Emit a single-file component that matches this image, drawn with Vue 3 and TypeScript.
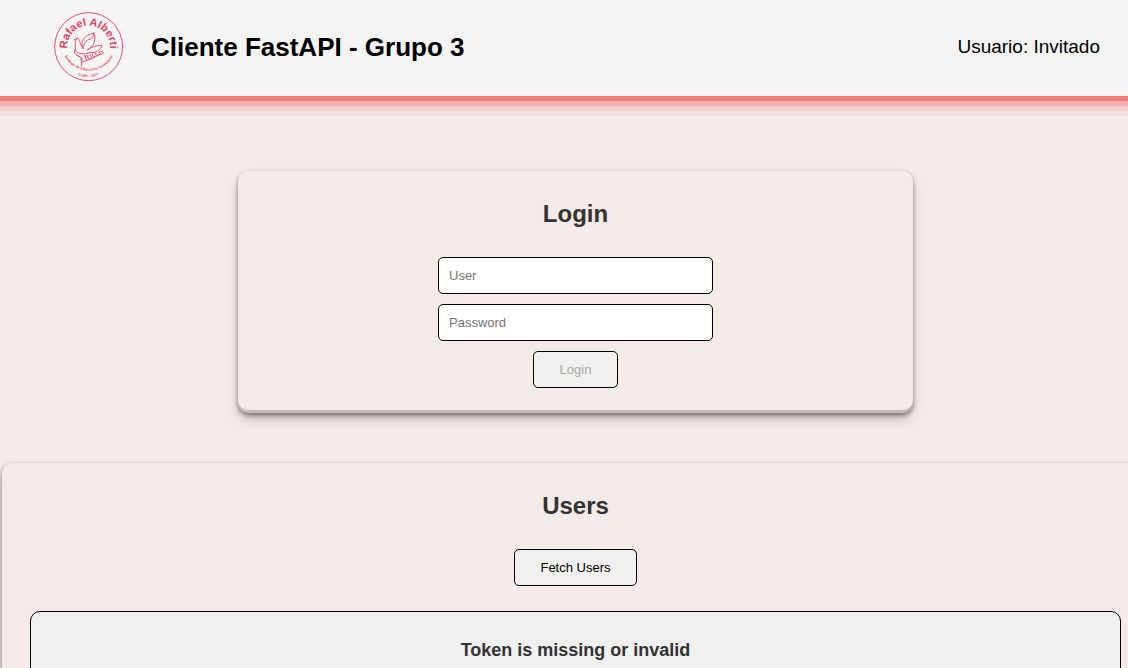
<script setup lang="ts">
import { computed, ref } from 'vue'

const username = ref('')
const password = ref('')
const currentUser = ref('Invitado')
const usersMessage = ref('Token is missing or invalid')

const canLogin = computed(() => username.value !== '' && password.value !== '')

function login(): void {
  if (canLogin.value) currentUser.value = username.value
}

function fetchUsers(): void {
  usersMessage.value = 'Token is missing or invalid'
}
</script>

<template>
  <div class="page">
    <header class="topbar">
      <svg class="logo" viewBox="18 17 210 210" role="img" aria-label="Rafael Alberti">
        <defs>
          <path id="arc-name" d="M62 144 A64 64 0 1 1 182 144" />
          <path id="arc-school" d="M44 122 A78 71 0 0 0 200 122" />
          <path id="arc-city" d="M62 190 A92 92 0 0 0 182 190" />
        </defs>
        <circle cx="122" cy="121" r="102" class="line ring" />
        <text class="name"><textPath href="#arc-name" startOffset="50%">Rafael Alberti</textPath></text>
        <text class="small"><textPath href="#arc-school" startOffset="50%">Instituto de Educación Secundaria</textPath></text>
        <text class="small"><textPath href="#arc-city" startOffset="50%">Cádiz - 1977</textPath></text>
        <g class="line">
          <path d="M105 126 C95 108 107 86 138 80 C145 99 139 119 119 130" />
          <path d="M105 126 C108 106 119 99 130 97 C134 95 137 88 138 80" />
          <path d="M119 130 C129 123 147 116 162 117 C157 132 145 140 126 139" />
          <path d="M78 101 L88 95 C96 98 94 112 105 126" />
          <path d="M88 95 C79 103 82 117 82 128 C83 142 101 146 126 139" />
          <path d="M82 128 C77 136 79 145 91 149 C101 153 100 165 101 178" />
          <path d="M91 149 C99 151 105 157 101 168 C116 163 139 155 158 142" />
          <path d="M110 146 L116 162 M109 153 C118 142 126 147 117 153 L127 158 M126 145 L132 155 M134 142 C132 151 139 155 141 149 M143 140 C142 151 151 152 151 143 M156 135 C151 139 158 148 164 143 C168 138 160 132 156 137" />
        </g>
      </svg>
      <h1 class="title">Cliente FastAPI - Grupo 3</h1>
      <p class="user">Usuario: {{ currentUser }}</p>
    </header>

    <main class="content">
      <section class="card card-login">
        <h2 class="heading">Login</h2>
        <form class="form" @submit.prevent="login">
          <input v-model="username" class="field" type="text" placeholder="User" aria-label="User" />
          <input v-model="password" class="field" type="password" placeholder="Password" aria-label="Password" />
          <button class="button" type="submit" :disabled="!canLogin">Login</button>
        </form>
      </section>

      <section class="card">
        <h2 class="heading">Users</h2>
        <button class="button" type="button" @click="fetchUsers">Fetch Users</button>
        <div class="panel">
          <h3 class="message">{{ usersMessage }}</h3>
        </div>
      </section>
    </main>
  </div>
</template>

<style>
body {
  margin: 0;
  background: #f4eae9;
}
</style>

<style scoped>
.page {
  min-height: 100vh;
  overflow: hidden;
  font-family: "Liberation Sans", Arial, sans-serif;
  color: #333;
}

.topbar {
  display: flex;
  align-items: center;
  padding: 12px 28px 14px 54px;
  background: #f4f4f4;
  box-shadow:
    0 5px #f27c7c,
    0 10px #f2afaf,
    0 15px #f3cdcd,
    0 20px #f4dfdf;
  color: #000;
}

.logo {
  width: 70px;
  height: 70px;
  margin-right: 27px;
}

.line {
  fill: none;
  stroke: #e0526f;
  stroke-width: 3;
  stroke-linejoin: round;
  stroke-linecap: round;
}

.name,
.small {
  fill: #df4463;
  font-weight: bold;
  text-anchor: middle;
}

.name {
  font-family: "Liberation Sans", sans-serif;
  font-size: 33px;
}

.small {
  font-family: "Liberation Serif", serif;
  font-size: 12px;
}

.title {
  margin: 0;
  font-size: 26px;
  line-height: 28px;
}

.user {
  margin: 0 0 0 auto;
  font-size: 19px;
  line-height: 20px;
}

.content {
  display: flex;
  flex-direction: column;
  gap: 50px;
  width: calc(100% + 19px);
  margin: 75px 0 0 2px;
}

.card {
  box-sizing: border-box;
  display: flex;
  flex-direction: column;
  align-items: center;
  padding: 29px 28px 25px;
  border-radius: 10px;
  box-shadow:
    rgba(0, 0, 0, 0.4) 0 2px 4px,
    rgba(0, 0, 0, 0.3) 0 7px 13px -3px,
    rgba(0, 0, 0, 0.2) 0 -3px 0 inset;
  background: #f4eae9;
}

.card-login {
  align-self: center;
  width: 60%;
  max-width: 675px;
}

.heading {
  margin: 0 0 29px;
  font-size: 24px;
  line-height: 28px;
}

.form {
  display: flex;
  flex-direction: column;
  align-items: center;
  gap: 10px;
}

.field,
.button {
  box-sizing: border-box;
  height: 37px;
  border: 1px solid #000;
  border-radius: 5px;
  font-family: inherit;
  font-size: 13px;
}

.field {
  width: 275px;
  padding: 10px;
  background: #fff;
}

.field::placeholder {
  color: #757575;
}

.button {
  min-width: 85px;
  padding: 10px 25px;
  background: #f0f0f0;
  color: #000;
}

.button:disabled {
  color: #aaa;
}

.panel {
  align-self: stretch;
  margin-top: 25px;
  padding: 27px;
  border: 1px solid #000;
  border-radius: 10px;
  background: #f0f0f0;
  text-align: center;
}

.message {
  margin: 0;
  font-size: 18px;
  line-height: 23px;
}
</style>
